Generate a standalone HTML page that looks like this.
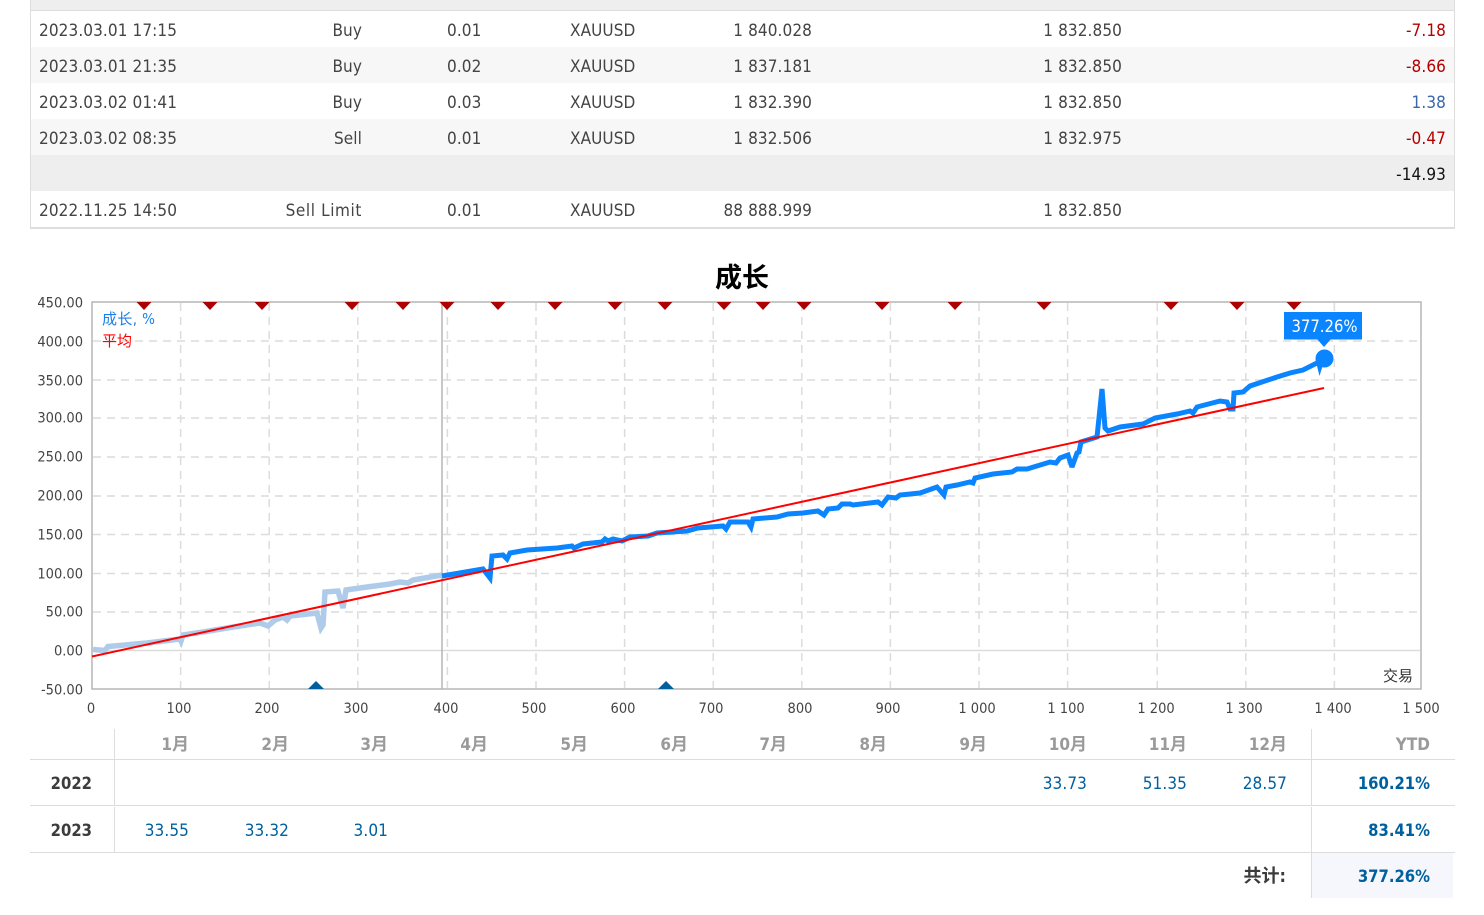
<!DOCTYPE html>
<html lang="zh"><head><meta charset="utf-8"><title>成长</title>
<style>
html,body{margin:0;padding:0;background:#fff;width:1484px;height:915px;overflow:hidden}
body{position:relative;font-family:"DejaVu Sans Condensed","DejaVu Sans","Noto Sans CJK SC",sans-serif;font-stretch:condensed}
.bx{position:absolute}
.t{position:absolute;margin-top:1px;font-size:17px;letter-spacing:.1px;line-height:20px;white-space:pre;color:#444}
.r{text-align:right;transform:translateX(-100%)}
.b{font-weight:bold;font-size:16.5px;letter-spacing:0;color:#3c3c3c}
.blue{color:#00609f}
.hd{color:#9a9a9a;font-weight:bold;font-size:17px;letter-spacing:0}
svg{position:absolute;left:0;top:0}
svg text{font-family:"DejaVu Sans Condensed","DejaVu Sans","Noto Sans CJK SC",sans-serif;font-stretch:condensed}
</style></head><body>

<div class="bx" style="left:30px;top:0;width:1425px;height:229px;background:#fff;box-sizing:border-box;border-left:1px solid #ddd;border-right:1px solid #ddd;border-bottom:2px solid #ddd"></div>
<div class="bx" style="left:31px;top:0;width:1423px;height:10px;background:#eee"></div>
<div class="bx" style="left:31px;top:10px;width:1423px;height:1px;background:#ddd"></div>
<div class="bx" style="left:31px;top:47px;width:1423px;height:36px;background:#f7f7f7"></div>
<div class="bx" style="left:31px;top:119px;width:1423px;height:36px;background:#f7f7f7"></div>
<div class="bx" style="left:31px;top:155px;width:1423px;height:36px;background:#eee"></div>

<span class="t" style="left:39px;top:20px">2023.03.01 17:15</span><span class="t r" style="left:362px;top:20px">Buy</span><span class="t" style="left:447px;top:20px">0.01</span><span class="t" style="left:570px;top:20px">XAUUSD</span><span class="t r" style="left:812px;top:20px">1 840.028</span><span class="t r" style="left:1122px;top:20px">1 832.850</span><span class="t r" style="left:1446px;top:20px;color:#b50000">-7.18</span>
<span class="t" style="left:39px;top:56px">2023.03.01 21:35</span><span class="t r" style="left:362px;top:56px">Buy</span><span class="t" style="left:447px;top:56px">0.02</span><span class="t" style="left:570px;top:56px">XAUUSD</span><span class="t r" style="left:812px;top:56px">1 837.181</span><span class="t r" style="left:1122px;top:56px">1 832.850</span><span class="t r" style="left:1446px;top:56px;color:#b50000">-8.66</span>
<span class="t" style="left:39px;top:92px">2023.03.02 01:41</span><span class="t r" style="left:362px;top:92px">Buy</span><span class="t" style="left:447px;top:92px">0.03</span><span class="t" style="left:570px;top:92px">XAUUSD</span><span class="t r" style="left:812px;top:92px">1 832.390</span><span class="t r" style="left:1122px;top:92px">1 832.850</span><span class="t r" style="left:1446px;top:92px;color:#3a68ab">1.38</span>
<span class="t" style="left:39px;top:128px">2023.03.02 08:35</span><span class="t r" style="left:362px;top:128px">Sell</span><span class="t" style="left:447px;top:128px">0.01</span><span class="t" style="left:570px;top:128px">XAUUSD</span><span class="t r" style="left:812px;top:128px">1 832.506</span><span class="t r" style="left:1122px;top:128px">1 832.975</span><span class="t r" style="left:1446px;top:128px;color:#b50000">-0.47</span>
<span class="t r" style="left:1446px;top:164px;color:#111">-14.93</span>
<span class="t" style="left:39px;top:200px">2022.11.25 14:50</span><span class="t r" style="left:362px;top:200px;letter-spacing:.6px">Sell Limit</span><span class="t" style="left:447px;top:200px">0.01</span><span class="t" style="left:570px;top:200px">XAUUSD</span><span class="t r" style="left:812px;top:200px">88 888.999</span><span class="t r" style="left:1122px;top:200px">1 832.850</span>

<svg width="1484" height="915" viewBox="0 0 1484 915">
<text x="742" y="287" text-anchor="middle" font-size="27" font-weight="bold" fill="#000">成长</text>
<g stroke="#dcdcdc" stroke-width="1.5" stroke-dasharray="8 6" fill="none">
<path d="M93 341H1420M93 380H1420M93 418H1420M93 457H1420M93 496H1420M93 534.5H1420M93 573.5H1420M93 612H1420"/>
<path d="M180.6 303V688M269.2 303V688M357.8 303V688M447.4 303V688M536 303V688M624.6 303V688M713.2 303V688M801.8 303V688M890.4 303V688M979 303V688M1067.6 303V688M1157.2 303V688M1245.8 303V688M1334.4 303V688"/>
</g>
<path d="M93 650.5H1420" stroke="#dcdcdc" stroke-width="1.5"/>
<rect x="92" y="302" width="1329" height="387" fill="none" stroke="#b5b5b5" stroke-width="1.5"/>
<path d="M442 302V689" stroke="#b5b5b5" stroke-width="1.5"/>
<g fill="#ad0000">
<path d="M136.500 302h15l-7.500 8zM202.500 302h15l-7.500 8zM254.500 302h15l-7.500 8zM344.500 302h15l-7.500 8zM395.500 302h15l-7.500 8zM439.500 302h15l-7.500 8zM490.500 302h15l-7.500 8zM547.500 302h15l-7.500 8zM607.500 302h15l-7.500 8zM657.500 302h15l-7.500 8zM716.500 302h15l-7.500 8zM755.500 302h15l-7.500 8zM796.500 302h15l-7.500 8zM874.500 302h15l-7.500 8zM947.500 302h15l-7.500 8zM1036.500 302h15l-7.500 8zM1163.500 302h15l-7.500 8zM1229.500 302h15l-7.500 8zM1286.500 302h15l-7.500 8z"/>
</g>
<path d="M308 689l8-8 8 8zM658 689l8-8 8 8z" fill="#005f9e"/>
<g fill="none" stroke-linejoin="miter" stroke-miterlimit="3">
<path stroke="#aecbe9" stroke-width="5.500" d="M93 649.500L105 650.500L108 646.500L147 643L180 639L181 641L183 635L203 632L233 627L260 623L268 626L275 620L283 617L287 620L290 616L317 613L321 628L323 625L325 592L338 591L343 608L346 590L367 587L390 584L400 582L408 583L413 580L442 575"/>
<path stroke="#0a84ff" stroke-width="5" d="M442 576L483 569L490 578L492 556L503 555L507 559L510 553L527 550L557 548L572 546L574 548L583 544L602 542L605 539L608 541L613 539L622 541L630 537L648 536L657 533L687 531L698 528L723 526L726 529L730 522L748 522L751 527L753 519L777 517L788 514L803 513L818 511L824 515L828 509L838 508L842 504L850 504L853 505L878 502L882 505L888 497L896 498L900 495L920 493L937 487L944 495L946 487L957 485L970 482L973 483L975 478L993 474L1012 472L1017 469L1027 469L1050 462L1056 463L1060 458L1068 455L1072 467L1077 453L1079 452L1081 442L1097 437L1102 389L1105 428L1108 431L1120 427L1143 424L1155 418L1177 414L1190 411L1193 413L1197 407L1220 401L1227 402L1230 409L1233 409L1234 393L1243 392L1250 386L1277 377L1290 373L1303 370L1317 363L1324 358"/>
<path stroke="#ff0000" stroke-width="2" d="M92 656.500L1324 388"/>
</g>
<path d="M1316 362l3.500 14 4-13z" fill="#0a84ff"/>
<circle cx="1324.500" cy="358.500" r="9" fill="#0a84ff"/>
<rect x="1284" y="312" width="78" height="27.500" fill="#0a84ff"/>
<path d="M1317 339l7 8 7-8z" fill="#0a84ff"/>
<text x="1324.500" y="332" text-anchor="middle" font-size="16.500" fill="#fff">377.26%</text>
<text x="102" y="324" font-size="15" letter-spacing=".4" fill="#1a7fe8">成长, %</text>
<text x="102" y="346" font-size="15" fill="#f00">平均</text>
<text x="1413" y="681" text-anchor="end" font-size="15" fill="#333">交易</text>
<g font-size="14.500" fill="#444" text-anchor="end">
<text x="83" y="307.500">450.00</text><text x="83" y="346.500">400.00</text><text x="83" y="385.500">350.00</text><text x="83" y="422.500">300.00</text><text x="83" y="461.500">250.00</text><text x="83" y="500.500">200.00</text><text x="83" y="539.500">150.00</text><text x="83" y="578.500">100.00</text><text x="83" y="616.500">50.00</text><text x="83" y="655.500">0.00</text><text x="83" y="694.500">-50.00</text>
</g>
<g font-size="14.500" fill="#444" text-anchor="middle">
<text x="91" y="713">0</text><text x="179" y="713">100</text><text x="267" y="713">200</text><text x="356" y="713">300</text><text x="446" y="713">400</text><text x="534" y="713">500</text><text x="623" y="713">600</text><text x="711" y="713">700</text><text x="800" y="713">800</text><text x="888" y="713">900</text><text x="977" y="713">1 000</text><text x="1066" y="713">1 100</text><text x="1156" y="713">1 200</text><text x="1244" y="713">1 300</text><text x="1333" y="713">1 400</text><text x="1421" y="713">1 500</text>
</g>
</svg>

<div class="bx" style="left:30px;top:759px;width:1425px;height:1px;background:#ddd"></div>
<div class="bx" style="left:30px;top:805px;width:1425px;height:1px;background:#ddd"></div>
<div class="bx" style="left:30px;top:852px;width:1425px;height:1px;background:#ddd"></div>
<div class="bx" style="left:1312px;top:853px;width:141px;height:45px;background:#f5f7fc"></div>
<div class="bx" style="left:114px;top:729px;width:1px;height:76px;background:#ddd"></div>
<div class="bx" style="left:114px;top:807px;width:1px;height:45px;background:#ddd"></div>
<div class="bx" style="left:1311px;top:729px;width:1px;height:76px;background:#ddd"></div>
<div class="bx" style="left:1311px;top:807px;width:1px;height:91px;background:#ddd"></div>

<span class="t r hd" style="left:189px;top:734px">1月</span><span class="t r hd" style="left:289px;top:734px">2月</span><span class="t r hd" style="left:388px;top:734px">3月</span><span class="t r hd" style="left:488px;top:734px">4月</span><span class="t r hd" style="left:588px;top:734px">5月</span><span class="t r hd" style="left:688px;top:734px">6月</span><span class="t r hd" style="left:787px;top:734px">7月</span><span class="t r hd" style="left:887px;top:734px">8月</span><span class="t r hd" style="left:987px;top:734px">9月</span><span class="t r hd" style="left:1087px;top:734px">10月</span><span class="t r hd" style="left:1187px;top:734px">11月</span><span class="t r hd" style="left:1287px;top:734px">12月</span><span class="t r hd" style="left:1430px;top:734px">YTD</span>

<span class="t r b" style="left:92px;top:773px">2022</span>
<span class="t r blue" style="left:1087px;top:773px">33.73</span><span class="t r blue" style="left:1187px;top:773px">51.35</span><span class="t r blue" style="left:1287px;top:773px">28.57</span><span class="t r b" style="left:1430px;top:773px;color:#00609f">160.21%</span>
<span class="t r b" style="left:92px;top:820px">2023</span>
<span class="t r blue" style="left:189px;top:820px">33.55</span><span class="t r blue" style="left:289px;top:820px">33.32</span><span class="t r blue" style="left:388px;top:820px">3.01</span><span class="t r b" style="left:1430px;top:820px;color:#00609f">83.41%</span>
<span class="t r b" style="left:1286px;top:866px;font-size:18px">共计:</span><span class="t r b" style="left:1430px;top:866px;color:#00609f">377.26%</span>
</body></html>
